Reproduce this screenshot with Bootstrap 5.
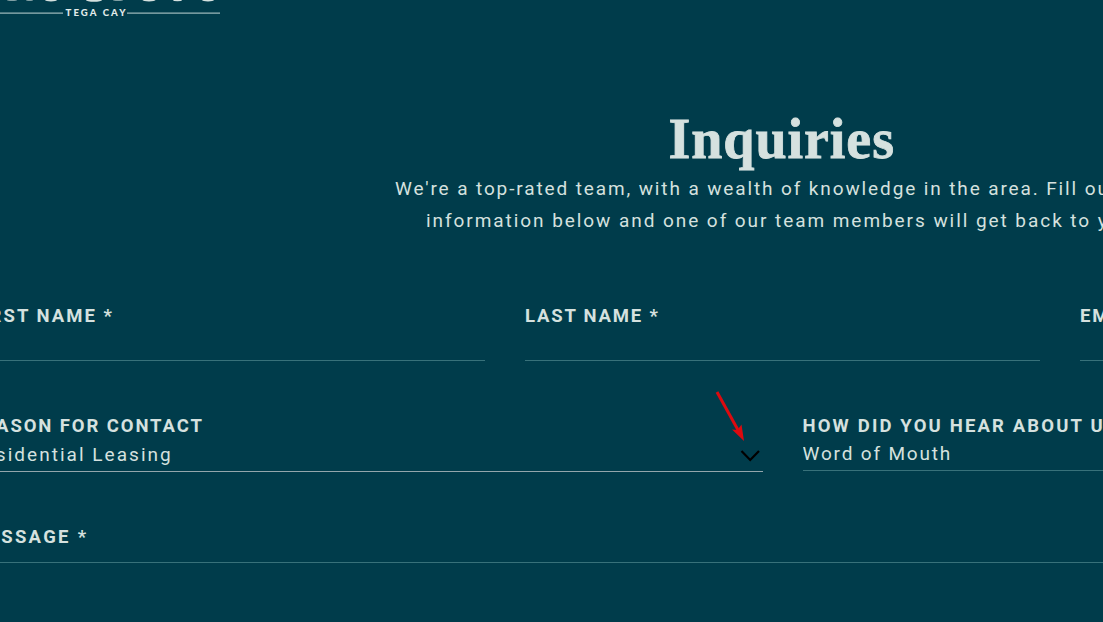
<!DOCTYPE html>
<html lang="en">
<head>
<meta charset="UTF-8" />
<meta name="viewport" content="width=device-width, initial-scale=1" />
<title>Inquiries</title>
<link href="https://cdn.jsdelivr.net/npm/bootstrap@5.3.2/dist/css/bootstrap.min.css" rel="stylesheet" />
<style>
  html, body { overflow: hidden; height: 100%; }
  body { background-color: #003c4b; color: #d5e1df; font-family: Roboto, "Liberation Sans", sans-serif; font-size: 19px; line-height: 32px; }
  .brand-logo { height: 106px; }
  .inquiry-page { width: 1625px; margin-left: -30px; }
  .page-title { font-family: "Liberation Serif", serif; font-weight: 700; font-size: 56px; line-height: 66px; letter-spacing: 0.95px; color: #d5e1df; margin: 0 0 1px 698.5px; -webkit-text-stroke: 0.8px #d5e1df; }
  .intro-line { white-space: nowrap; letter-spacing: 1.88px; padding-left: 425px; }
  .intro-second { letter-spacing: 1.94px; padding-left: 456px; }
  .inquiry-form { padding-top: 65px; }
  .field-row { gap: 40px; margin-bottom: 51px; }
  .field-col { flex: 1 1 0; min-width: 0; }
  .form-label { display: block; font-weight: 700; font-size: 18.5px; line-height: 28px; letter-spacing: 1.9px; margin: 0; white-space: nowrap; }
  .label-first { letter-spacing: 2.03px; }
  .label-last { letter-spacing: 1.8px; }
  .label-source { letter-spacing: 2.15px; }
  .label-message { letter-spacing: 2.3px; }
  .form-control, .form-control:focus, .form-select, .form-select:focus { background: transparent; color: #d5e1df; border: 0; border-bottom: 1px solid #38717a; border-radius: 0; box-shadow: none; padding: 0; font-size: 19px; line-height: 28px; }
  .form-control { height: 31px; }
  .form-select { height: 31px; letter-spacing: 1.83px; padding: 0 0 2px; }
  .form-select.reason-select { height: 32px; letter-spacing: 2.03px; padding: 1px 0 2px; border-bottom-color: #93a6ac; }
  textarea.form-control.message-box { display: block; height: 12px; min-height: 0; resize: none; overflow: hidden; }
  .select-chevron { right: 3px; bottom: 9px; }
  .pointer-arrow { right: 17px; bottom: 29px; }
</style>
</head>
<body>

<header class="brand-logo">
  <svg class="d-block" width="230" height="24" role="img" aria-label="Tega Cay">
    <!-- lower edge of the wordmark -->
    <g fill="#d5e1df">
      <ellipse cx="12" cy="0" rx="5" ry="1" opacity=".6" />
      <ellipse cx="29.500" cy="0" rx="3.500" ry="1" opacity=".6" />
      <ellipse cx="51" cy="0" rx="6" ry="1.500" />
      <ellipse cx="94" cy="0" rx="8" ry="1.800" />
      <ellipse cx="118" cy="0" rx="5" ry="1" opacity=".6" />
      <ellipse cx="149" cy="0" rx="6.500" ry="1.500" />
      <ellipse cx="177.500" cy="0" rx="4.500" ry="1.200" />
      <ellipse cx="208" cy="0" rx="6" ry="1.500" />
    </g>
    <path d="M0 13.200H63M127 13.200H220" stroke="#9bb6ba" stroke-width="1.200" />
    <text x="65.500" y="16.400" textLength="60" fill="#e2ebea" font-family="Lato" font-weight="900" font-size="9.600">TEGA CAY</text>
  </svg>
</header>

<main class="inquiry-page">
  <h1 class="page-title">Inquiries</h1>
  <p class="mb-0">
    <span class="intro-line d-block">We're a top-rated team, with a wealth of knowledge in the area. Fill out the</span>
    <span class="intro-line intro-second d-block">information below and one of our team members will get back to you.</span>
  </p>

  <form class="inquiry-form">
    <div class="field-row d-flex">
      <div class="field-col">
        <label for="firstName" class="form-label label-first">FIRST NAME *</label>
        <input type="text" id="firstName" class="form-control" required />
      </div>
      <div class="field-col">
        <label for="lastName" class="form-label label-last">LAST NAME *</label>
        <input type="text" id="lastName" class="form-control" required />
      </div>
      <div class="field-col">
        <label for="email" class="form-label">EMAIL *</label>
        <input type="email" id="email" class="form-control" required />
      </div>
    </div>

    <div class="field-row d-flex align-items-start">
      <div class="field-col position-relative">
        <label for="reason" class="form-label">REASON FOR CONTACT</label>
        <select id="reason" class="form-select reason-select">
          <option>Residential Leasing</option>
        </select>
        <svg class="select-chevron position-absolute" width="20" height="14" fill="none" stroke="#000" stroke-width="2.200">
          <path d="M1.500 2L10.200 11L19 2" />
        </svg>
        <svg class="pointer-arrow position-absolute" width="32" height="52" fill="#dc0a0f">
          <path d="M3 1L24 39" stroke="#dc0a0f" stroke-width="3" />
          <path d="M30 50L18 38.500L23.500 39L27.500 33.500Z" />
        </svg>
      </div>
      <div class="field-col">
        <label for="source" class="form-label label-source">HOW DID YOU HEAR ABOUT US?</label>
        <select id="source" class="form-select">
          <option>Word of Mouth</option>
        </select>
      </div>
    </div>

    <label for="message" class="form-label label-message">MESSAGE *</label>
    <textarea id="message" class="form-control message-box" required></textarea>
  </form>
</main>

<script src="https://cdn.jsdelivr.net/npm/bootstrap@5.3.2/dist/js/bootstrap.bundle.min.js"></script>
</body>
</html>
